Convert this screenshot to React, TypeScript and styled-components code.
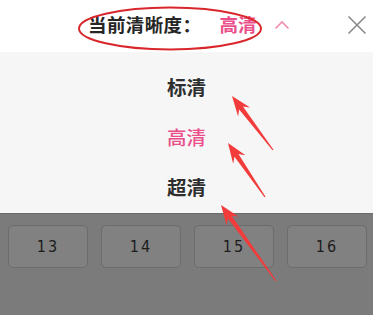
import React, {FC} from "react";
import styled, {createGlobalStyle} from "styled-components";

const GlobalStyle = createGlobalStyle`
  html, body { margin: 0; padding: 0; }
  body { width: 373px; height: 315px; overflow: hidden; font-family: "Noto Sans CJK SC", "Liberation Sans", sans-serif; }
`

const PINK = "#ea4f8b"

const Page = styled.div`
  position: relative;
  width: 373px;
  height: 315px;
  display: flex;
  flex-direction: column;
  background: #7b7b7b;
  overflow: hidden;
`

const Header = styled.div`
  height: 52px;
  background: #fff;
  display: flex;
  align-items: center;
  padding: 0 6px 4px 88px;
  box-sizing: border-box;
`

const Label = styled.span`
  font-size: 18.5px;
  font-weight: 700;
  color: #262626;
  letter-spacing: 0.4px;
`

const Current = styled.span`
  font-size: 18.5px;
  font-weight: 700;
  color: ${PINK};
  margin-left: 18px;
`

const Chevron = styled.svg`
  margin-left: 18px;
  margin-top: 2px;
`

const Close = styled.svg`
  margin-left: auto;
  margin-top: 2px;
`

const Sheet = styled.div`
  height: 161px;
  background: #f6f6f6;
  padding-top: 9px;
  box-sizing: border-box;
  display: flex;
  flex-direction: column;
  box-shadow: 0 1px 0 #6a6a6a;
`

const Option = styled.div<{$active?: boolean}>`
  height: 50px;
  display: flex;
  align-items: center;
  justify-content: center;
  font-size: 19.5px;
  font-weight: ${p => p.$active ? 500 : 700};
  color: ${p => p.$active ? PINK : "#2e2e2e"};
`

const Keys = styled.div`
  display: grid;
  grid-template-columns: repeat(4, 80px);
  column-gap: 13px;
  padding: 12px 0 0 8px;
`

const Key = styled.div`
  height: 43px;
  border: 1px solid #6c6c6c;
  border-radius: 5px;
  background: #818181;
  box-sizing: border-box;
  display: flex;
  align-items: center;
  justify-content: center;
  font-family: "DejaVu Sans Condensed", "Liberation Sans", sans-serif;
  font-size: 16px;
  color: #1c1c1c;
  letter-spacing: 2px;
`

const Marks = styled.svg`
  position: absolute;
  left: 0;
  top: 0;
  pointer-events: none;
`

type TArrow = {x1: number, y1: number, x2: number, y2: number}

const Arrow: FC<TArrow> = ({x1, y1, x2, y2}) => {
    const a = Math.atan2(y2 - y1, x2 - x1)
    const ux = Math.cos(a), uy = Math.sin(a)
    const px = -uy, py = ux
    const len = 20, half = 7.5, notch = 5
    const bx = x2 - ux * len, by = y2 - uy * len
    const nx = bx + ux * notch, ny = by + uy * notch
    const w = 2.4
    const pts = [
        [x1 + px * 0.6, y1 + py * 0.6],
        [nx + px * w, ny + py * w],
        [bx + px * half, by + py * half],
        [x2, y2],
        [bx - px * half, by - py * half],
        [nx - px * w, ny - py * w],
        [x1 - px * 0.6, y1 - py * 0.6],
    ].map(p => p.join(",")).join(" ")
    return <polygon points={pts} fill="#f23b3b"/>
}

export default function App() {
    return <Page>
        <GlobalStyle/>
        <Header>
            <Label>当前清晰度：</Label>
            <Current>高清</Current>
            <Chevron width="16" height="10" viewBox="0 0 16 10">
                <polyline points="1.5,8.5 8,2 14.5,8.5" fill="none" stroke="#f08cb0" strokeWidth="1.6"/>
            </Chevron>
            <Close width="20" height="20" viewBox="0 0 20 20">
                <path d="M1.5 1.5 L18.5 18.5 M18.5 1.5 L1.5 18.5" stroke="#8a8a8a" strokeWidth="1.6"/>
            </Close>
        </Header>
        <Sheet>
            <Option>标清</Option>
            <Option $active>高清</Option>
            <Option>超清</Option>
        </Sheet>
        <Keys>
            {["13", "14", "15", "16"].map(k => <Key key={k}>{k}</Key>)}
        </Keys>
        <Marks width="373" height="315" viewBox="0 0 373 315">
            <ellipse cx="170" cy="28.5" rx="91" ry="21" fill="none" stroke="#d9262b" strokeWidth="2"/>
            <Arrow x1={273} y1={150} x2={232} y2={96}/>
            <Arrow x1={265} y1={197} x2={228} y2={143}/>
            <Arrow x1={276} y1={281} x2={221} y2={205}/>
        </Marks>
    </Page>
}
